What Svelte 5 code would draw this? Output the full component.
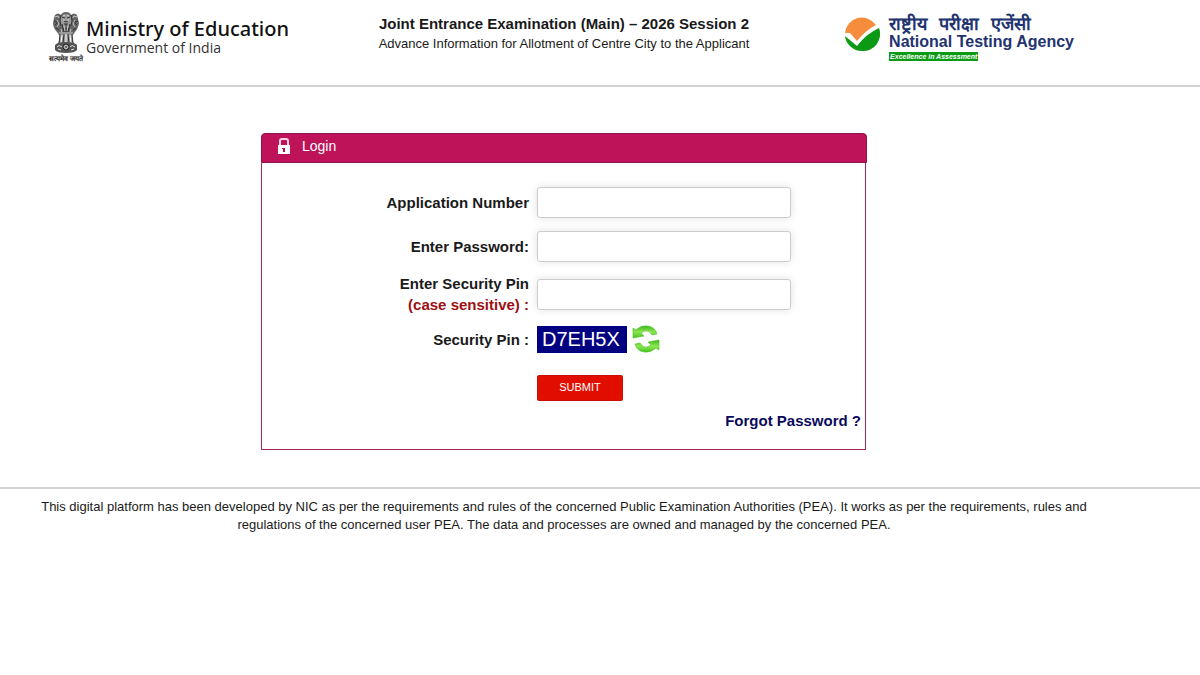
<script lang="ts">
  let applicationNumber = $state("");
  let password = $state("");
  let securityPin = $state("");
  let captcha = $state("D7EH5X");

  const chars = "ABCDEFGHJKLMNPQRSTUVWXYZ23456789";

  function refreshCaptcha() {
    let next = "";
    for (let i = 0; i < 6; i++) {
      next += chars[Math.floor(Math.random() * chars.length)];
    }
    captcha = next;
  }

  function submit(e: SubmitEvent) {
    e.preventDefault();
  }
</script>

<header class="header">
  <div class="container header-row">
    <div class="ministry">
      <div class="emblem">
        <svg viewBox="0 0 28 42" width="28" height="42" aria-hidden="true">
          <!-- lions -->
          <path d="M9 3 Q10 0 14 0 Q18 0 19 3 Q22 0 25 3 L26 7 L27 11 Q26 17 23 20 L21 23 H7 L5 20 Q1 16 1 11 L2 6 L3 3 Q6 0 9 3Z" fill="#666" />
          <path d="M9 5 Q11 2 14 2 Q17 2 19 5 L20 10 Q18 16 14 16 Q10 16 8 10Z" fill="#999" />
          <g fill="none" stroke="#333">
            <path d="M9 3 Q7 8 9 14 M19 3 Q21 8 19 14 M10 12 L12 20 M18 12 L16 20 M14 12 V21" />
            <path d="M10 5 L13 6 M18 5 L15 6 M12 9 L14 10 L16 9 M12 12 H16" />
            <path d="M2 9 L6 10 L3 13 M26 9 L22 10 L25 13 M4 16 L7 18 M24 16 L21 18" />
          </g>
          <g fill="none" stroke="#ddd" stroke-width="0.8">
            <path d="M3 5 L6 4 L7 6 M25 5 L22 4 L21 6 M5 8 L7 12 L5 15 M23 8 L21 12 L23 15" />
            <path d="M11 4 L13 3 M17 4 L15 3 M11 8 L13 8 M17 8 L15 8 M9 17 L10 21 M19 17 L18 21 M12 14 L13 19 M16 14 L15 19" />
          </g>
          <!-- legs -->
          <path d="M7 20 H21 L20 25 L22 32 H6 L8 25Z" fill="#999" />
          <path d="M8 22 L7 32 M12 22 L11 32 M16 22 L17 32 M20 22 L21 32" stroke="#333" fill="none" />
          <path d="M10 23 L9 31 M14 22 V31 M18 23 L19 31" stroke="#fff" fill="none" />
          <!-- abacus with wheel -->
          <path d="M3 33 Q5 30 14 30 Q23 30 25 33 V38 Q23 41 14 41 Q5 41 3 38Z" fill="#555" />
          <circle cx="14" cy="35" r="3" fill="#eee" stroke="#222" />
          <path d="M14 32 V38 M11 35 H17 M12 33 L16 37 M16 33 L12 37" stroke="#444" stroke-width="0.6" />
          <path d="M5 35 Q7 32 10 35 M18 35 Q20 32 23 35 M6 37 L9 38 M22 37 L19 38" stroke="#ddd" fill="none" />
        </svg>
        <span class="motto" lang="hi">सत्यमेव जयते</span>
      </div>
      <div class="ministry-text">
        <span class="ministry-name">Ministry of Education</span>
        <span class="ministry-sub">Government of India</span>
      </div>
    </div>

    <div class="exam">
      <h1>Joint Entrance Examination (Main) – 2026 Session 2</h1>
      <p>Advance Information for Allotment of Centre City to the Applicant</p>
    </div>

    <div class="nta">
      <svg viewBox="0 0 36 36" width="36" height="36" aria-hidden="true">
        <path d="M1 17 A17 17 0 0 1 32 9 Q22 14 13 25 L6 17Z" fill="#f58d3d" />
        <path d="M1 20 L13 30 Q22 18 35 12 A17 17 0 0 1 18 35 A17 17 0 0 1 1 20Z" fill="#0a9a14" />
      </svg>
      <div class="nta-text">
        <span class="nta-hindi" lang="hi">
          <span>राष्ट्रीय</span>
          <span>परीक्षा</span>
          <span>एजेंसी</span>
        </span>
        <span class="nta-name">National Testing Agency</span>
        <span class="nta-tag">Excellence in Assessment</span>
      </div>
    </div>
  </div>
</header>

<main class="container">
  <section class="panel">
    <h2 class="panel-head">
      <svg viewBox="0 0 12 16" width="12" height="16" aria-hidden="true">
        <path d="M2 8 V3 Q2 1 4 1 H8 Q10 1 10 3 V8" fill="none" stroke="#fbd3e4" stroke-width="2" />
        <rect y="7" width="12" height="9" fill="#fff" />
        <path d="M4 10 H7 V14 H5 V11 H4Z" fill="#a80f4c" />
      </svg>
      Login
    </h2>
    <form class="panel-body" onsubmit={submit}>
      <div class="row">
        <label for="app-no">Application Number</label>
        <input id="app-no" type="text" bind:value={applicationNumber} />
      </div>
      <div class="row">
        <label for="password">Enter Password:</label>
        <input id="password" type="password" bind:value={password} />
      </div>
      <div class="row">
        <label for="pin">Enter Security Pin<br /><span class="case">(case sensitive) :</span></label>
        <input id="pin" type="text" bind:value={securityPin} />
      </div>
      <div class="row captcha-row">
        <span class="label">Security Pin :</span>
        <div class="captcha">
          <output>{captcha}</output>
          <button class="refresh" type="button" aria-label="Refresh security pin" onclick={refreshCaptcha}>
            <svg viewBox="0 0 28 28" width="28" height="28" aria-hidden="true">
              <defs>
                <linearGradient id="green" x1="0" y1="0" x2="0" y2="1">
                  <stop offset="0" stop-color="#3cb51c" />
                  <stop offset="0.5" stop-color="#8ee650" />
                  <stop offset="1" stop-color="#45c322" />
                </linearGradient>
              </defs>
              <g fill="url(#green)" stroke="#4fc42b" stroke-width="0.6">
                <path d="M1 3 L4 5 Q9 0 16 1 Q23 2 25 9 L20 10 Q17 5 13 6 Q10 7 9 8 L12 11 L1 13Z" />
                <path d="M27 25 L24 23 Q19 28 12 27 Q5 26 3 19 L8 18 Q11 23 15 22 Q18 21 19 20 L16 17 L27 15Z" />
              </g>
            </svg>
          </button>
        </div>
      </div>
      <div class="row actions">
        <button class="submit" type="submit">SUBMIT</button>
      </div>
      <a class="forgot" href="#forgot">Forgot Password ?</a>
    </form>
  </section>
</main>

<footer class="footer">
  <p class="container">
    This digital platform has been developed by NIC as per the requirements and rules of the concerned
    Public Examination Authorities (PEA). It works as per the requirements, rules and regulations of the
    concerned user PEA. The data and processes are owned and managed by the concerned PEA.
  </p>
</footer>

<style>
  :global(body) {
    margin: 0;
    background: #fff;
    color: #1a1a1a;
    font-family: "Liberation Sans", Arial, sans-serif;
  }
  h1, h2, p {
    margin: 0;
  }
  .container {
    box-sizing: border-box;
    width: 94%;
    padding: 0 48px;
  }

  /* ── Header ── */
  .header {
    border-bottom: 2px solid #d2d2d2;
  }
  .header-row {
    display: grid;
    grid-template-columns: 1fr auto 1fr;
    align-items: start;
    padding-top: 12px;
    padding-bottom: 8px;
    min-height: 85px;
  }
  .ministry {
    display: flex;
    gap: 2px;
  }
  .emblem {
    display: flex;
    flex-direction: column;
    align-items: center;
    width: 36px;
  }
  .motto {
    font-size: 7px;
    line-height: 10px;
    font-weight: 700;
    white-space: nowrap;
  }
  .ministry-text {
    display: flex;
    flex-direction: column;
    padding-top: 6px;
    white-space: nowrap;
  }
  .ministry-name {
    font-family: "Noto Sans", sans-serif;
    font-size: 20px;
    line-height: 22px;
    font-weight: 500;
    color: #111;
  }
  .ministry-sub {
    font-family: "Open Sans", sans-serif;
    font-size: 14px;
    line-height: 16px;
    color: #333;
  }
  .exam {
    padding-top: 2px;
    text-align: center;
  }
  .exam h1 {
    font-size: 15px;
    line-height: 20px;
  }
  .exam p {
    font-size: 13px;
    line-height: 20px;
  }
  .nta {
    display: flex;
    justify-content: flex-end;
    gap: 9px;
    padding: 4px 6px 0 0;
  }
  .nta-text {
    display: flex;
    flex-direction: column;
    align-items: flex-start;
    color: #22336f;
    font-weight: 700;
    white-space: nowrap;
  }
  .nta-hindi {
    display: flex;
    gap: 12px;
    font-size: 18px;
    line-height: 16px;
    font-weight: 600;
  }
  .nta-name {
    font-size: 16px;
    line-height: 20px;
  }
  .nta-tag {
    padding: 0 1px;
    background: #0a9a14;
    color: #fff;
    font-size: 7px;
    line-height: 9px;
    font-style: italic;
  }

  /* ── Login panel ── */
  .panel {
    width: 606px;
    max-width: 100%;
    margin: 46px auto 37px;
  }
  .panel-head {
    display: flex;
    align-items: center;
    gap: 12px;
    box-sizing: border-box;
    height: 30px;
    padding: 0 16px 4px;
    border: 1px solid #8e1248;
    border-radius: 4px 4px 0 0;
    background: #be1259;
    color: #fff;
    font-size: 14px;
    font-weight: 400;
  }
  .panel-body {
    display: flex;
    flex-direction: column;
    gap: 10px;
    margin-right: 1px;
    padding: 22px 4px 18px 0;
    border: 1px solid #9c2a5c;
    border-top: none;
  }
  .row {
    display: grid;
    grid-template-columns: 267px 1fr;
    align-items: center;
    gap: 8px;
    min-height: 34px;
  }
  .captcha-row {
    min-height: 28px;
  }
  label,
  .label {
    font-size: 15px;
    line-height: 21px;
    font-weight: 700;
    text-align: right;
  }
  .case {
    color: #9c1014;
  }
  input {
    box-sizing: border-box;
    width: 254px;
    height: 31px;
    padding: 4px 8px;
    border: 1px solid #ccc;
    border-radius: 3px;
    box-shadow: 0 0 8px rgba(0, 0, 0, 0.12);
    font: inherit;
    font-size: 14px;
  }
  .captcha {
    display: flex;
    align-items: center;
    gap: 5px;
  }
  .captcha output {
    padding: 0 7px 0 5px;
    background: #000080;
    color: #fff;
    font-size: 20px;
    line-height: 27px;
  }
  .refresh {
    display: flex;
    padding: 0;
    border: none;
    background: none;
    cursor: pointer;
  }
  .actions {
    padding-top: 12px;
    min-height: 26px;
  }
  .submit {
    grid-column: 2;
    justify-self: start;
    width: 86px;
    height: 26px;
    padding: 0 0 2px;
    border: 1px solid #c80f05;
    border-radius: 2px;
    background: #e10e00;
    color: #fff;
    font-family: inherit;
    font-size: 11px;
    cursor: pointer;
  }
  .forgot {
    align-self: flex-end;
    color: #0a0a5c;
    font-size: 15px;
    line-height: 20px;
    font-weight: 700;
    text-decoration: none;
  }

  /* ── Footer ── */
  .footer {
    border-top: 2px solid #d2d2d2;
    padding-top: 9px;
    font-size: 13px;
    line-height: 18px;
    text-align: center;
  }
  .footer .container {
    padding: 0 36px;
  }
</style>
